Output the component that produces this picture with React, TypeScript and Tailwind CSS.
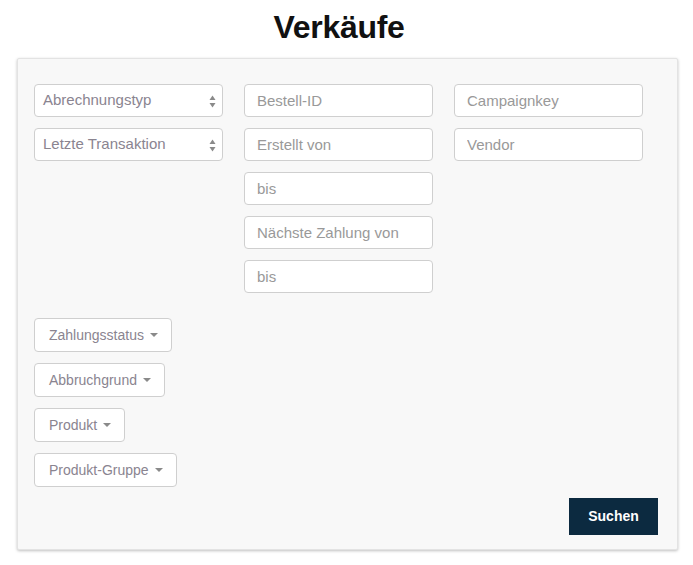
const col2 = ['Bestell-ID', 'Erstellt von', 'bis', 'Nächste Zahlung von', 'bis']
const col3 = ['Campaignkey', 'Vendor']
const dropdowns = ['Zahlungsstatus', 'Abbruchgrund', 'Produkt', 'Produkt-Gruppe']

function Select({ label }: { label: string }) {
  return (
    <div className="relative h-[33px] w-[189px] rounded-[4px] border border-[#cfcfcf] bg-white flex items-center pl-[8px] text-[15px] text-[#8a8490]">
      <span>{label}</span>
      <svg className="absolute right-[6px] top-[10px]" width="7" height="13" viewBox="0 0 7 13">
        <path d="M3.5 0.5 L6.5 5 L0.5 5 Z" fill="#8a8a8a" />
        <path d="M0.5 8 L6.5 8 L3.5 12.5 Z" fill="#8a8a8a" />
      </svg>
    </div>
  )
}

function Input({ placeholder }: { placeholder: string }) {
  return (
    <input
      placeholder={placeholder}
      className="h-[33px] w-[189px] rounded-[4px] border border-[#cfcfcf] bg-white px-[12px] text-[15px] text-[#555] placeholder:text-[#999] outline-none"
    />
  )
}

export default function App() {
  return (
    <div className="min-h-screen bg-white pt-[9px] font-['Liberation_Sans',Arial,sans-serif]">
      <h1 className="pr-[15px] text-center text-[32px] leading-[36px] font-bold text-[#111] tracking-[-0.3px]">Verkäufe</h1>

      <div className="mx-[17px] mt-[13px] h-[492px] w-[661px] rounded-[2px] border border-[#e3e3e3] bg-[#f8f8f8] shadow-[0_1px_3px_rgba(0,0,0,0.25)] px-[16px] pt-[25px] flex flex-col">
        <div className="flex gap-[21px]">
          <div className="flex flex-col gap-[11px]">
            <Select label="Abrechnungstyp" />
            <Select label="Letzte Transaktion" />
          </div>
          <div className="flex flex-col gap-[11px]">
            {col2.map((p, i) => (
              <Input key={i} placeholder={p} />
            ))}
          </div>
          <div className="flex flex-col gap-[11px]">
            {col3.map((p) => (
              <Input key={p} placeholder={p} />
            ))}
          </div>
        </div>

        <div className="mt-[25px] flex flex-col items-start gap-[11px]">
          {dropdowns.map((d) => (
            <button
              key={d}
              className="h-[34px] rounded-[4px] border border-[#cfcfcf] bg-white pl-[14px] pr-[13px] flex items-center gap-[6px] text-[14px] text-[#8a8490]"
            >
              <span>{d}</span>
              <svg width="8" height="4" viewBox="0 0 8 4">
                <path d="M0 0 L8 0 L4 4 Z" fill="#8a8a8a" />
              </svg>
            </button>
          ))}
        </div>

        <div className="mt-[11px] flex justify-end pr-[3px]">
          <button className="h-[37px] w-[89px] bg-[#0c2a40] text-white text-[14px] font-bold">Suchen</button>
        </div>
      </div>
    </div>
  )
}
